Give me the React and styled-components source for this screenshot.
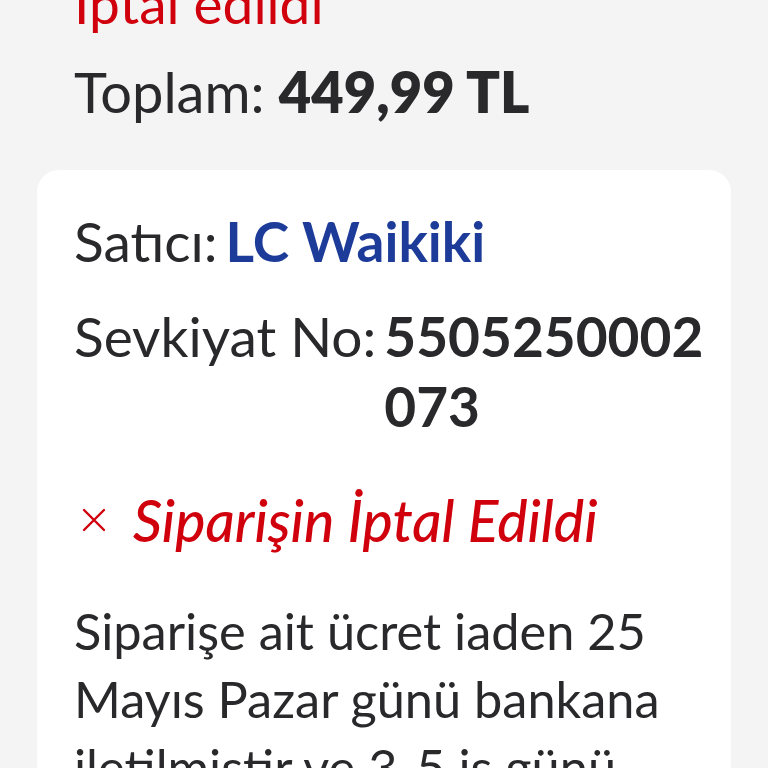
import React from "react";
import styled, { createGlobalStyle } from "styled-components";

const Global = createGlobalStyle`
  html, body { margin: 0; padding: 0; background: #f4f4f5; }
  body { font-family: Lato, "Noto Sans", sans-serif; color: #29292b; }
`;

const Page = styled.div`
  width: 768px;
  height: 768px;
  overflow: hidden;
  padding: 0 37px;
  box-sizing: border-box;
`;

const Summary = styled.div`
  padding: 0 37px;
  margin-top: -32px;
`;

const StatusTop = styled.div`
  color: #d0000c;
  font-size: 55px;
  line-height: 70px;
`;

const Total = styled.div`
  font-size: 56px;
  line-height: 70px;
  margin-top: 19px;
  b { font-weight: 800; }
`;

const Card = styled.div`
  margin-top: 43px;
  background: #ffffff;
  border-radius: 22px;
  padding: 36px 20px 40px 37px;
`;

const Row = styled.div`
  display: flex;
  font-size: 55px;
  line-height: 70px;
  & + & { margin-top: 25px; }
`;

const Label = styled.span`
  white-space: nowrap;
  margin-right: 8px;
`;

const Value = styled.span`
  font-weight: 700;
  color: ${(p) => (p.$blue ? "#1d3b98" : "#29292b")};
  word-break: break-all;
`;

const Cancelled = styled.div`
  display: flex;
  align-items: center;
  color: #d0000c;
  margin-top: 44px;
  height: 70px;
`;

const Cross = styled.svg`
  width: 24px;
  height: 24px;
  margin: 0 27px 0 8px;
  flex: none;
`;

const CancelText = styled.span`
  font-style: italic;
  font-size: 57px;
  font-weight: 500;
  line-height: 70px;
`;

const Body = styled.p`
  margin: 42px 0 0;
  font-size: 50.5px;
  line-height: 68px;
`;

export default function App() {
  return (
    <Page>
      <Global />
      <Summary>
        <StatusTop>İptal edildi</StatusTop>
        <Total>
          Toplam: <b>449,99 TL</b>
        </Total>
      </Summary>
      <Card>
        <Row>
          <Label>Satıcı:</Label>
          <Value $blue>LC Waikiki</Value>
        </Row>
        <Row>
          <Label>Sevkiyat No:</Label>
          <Value>5505250002073</Value>
        </Row>
        <Cancelled>
          <Cross viewBox="0 0 24 24" fill="none" stroke="currentColor" strokeWidth="2.4" strokeLinecap="round">
            <path d="M2 2L22 22M22 2L2 22" />
          </Cross>
          <CancelText>Siparişin İptal Edildi</CancelText>
        </Cancelled>
        <Body>
          Siparişe ait ücret iaden 25 Mayıs Pazar günü bankana iletilmiştir ve 3-5 iş günü
          içerisinde hesabına yansıyacaktır.
        </Body>
      </Card>
    </Page>
  );
}
